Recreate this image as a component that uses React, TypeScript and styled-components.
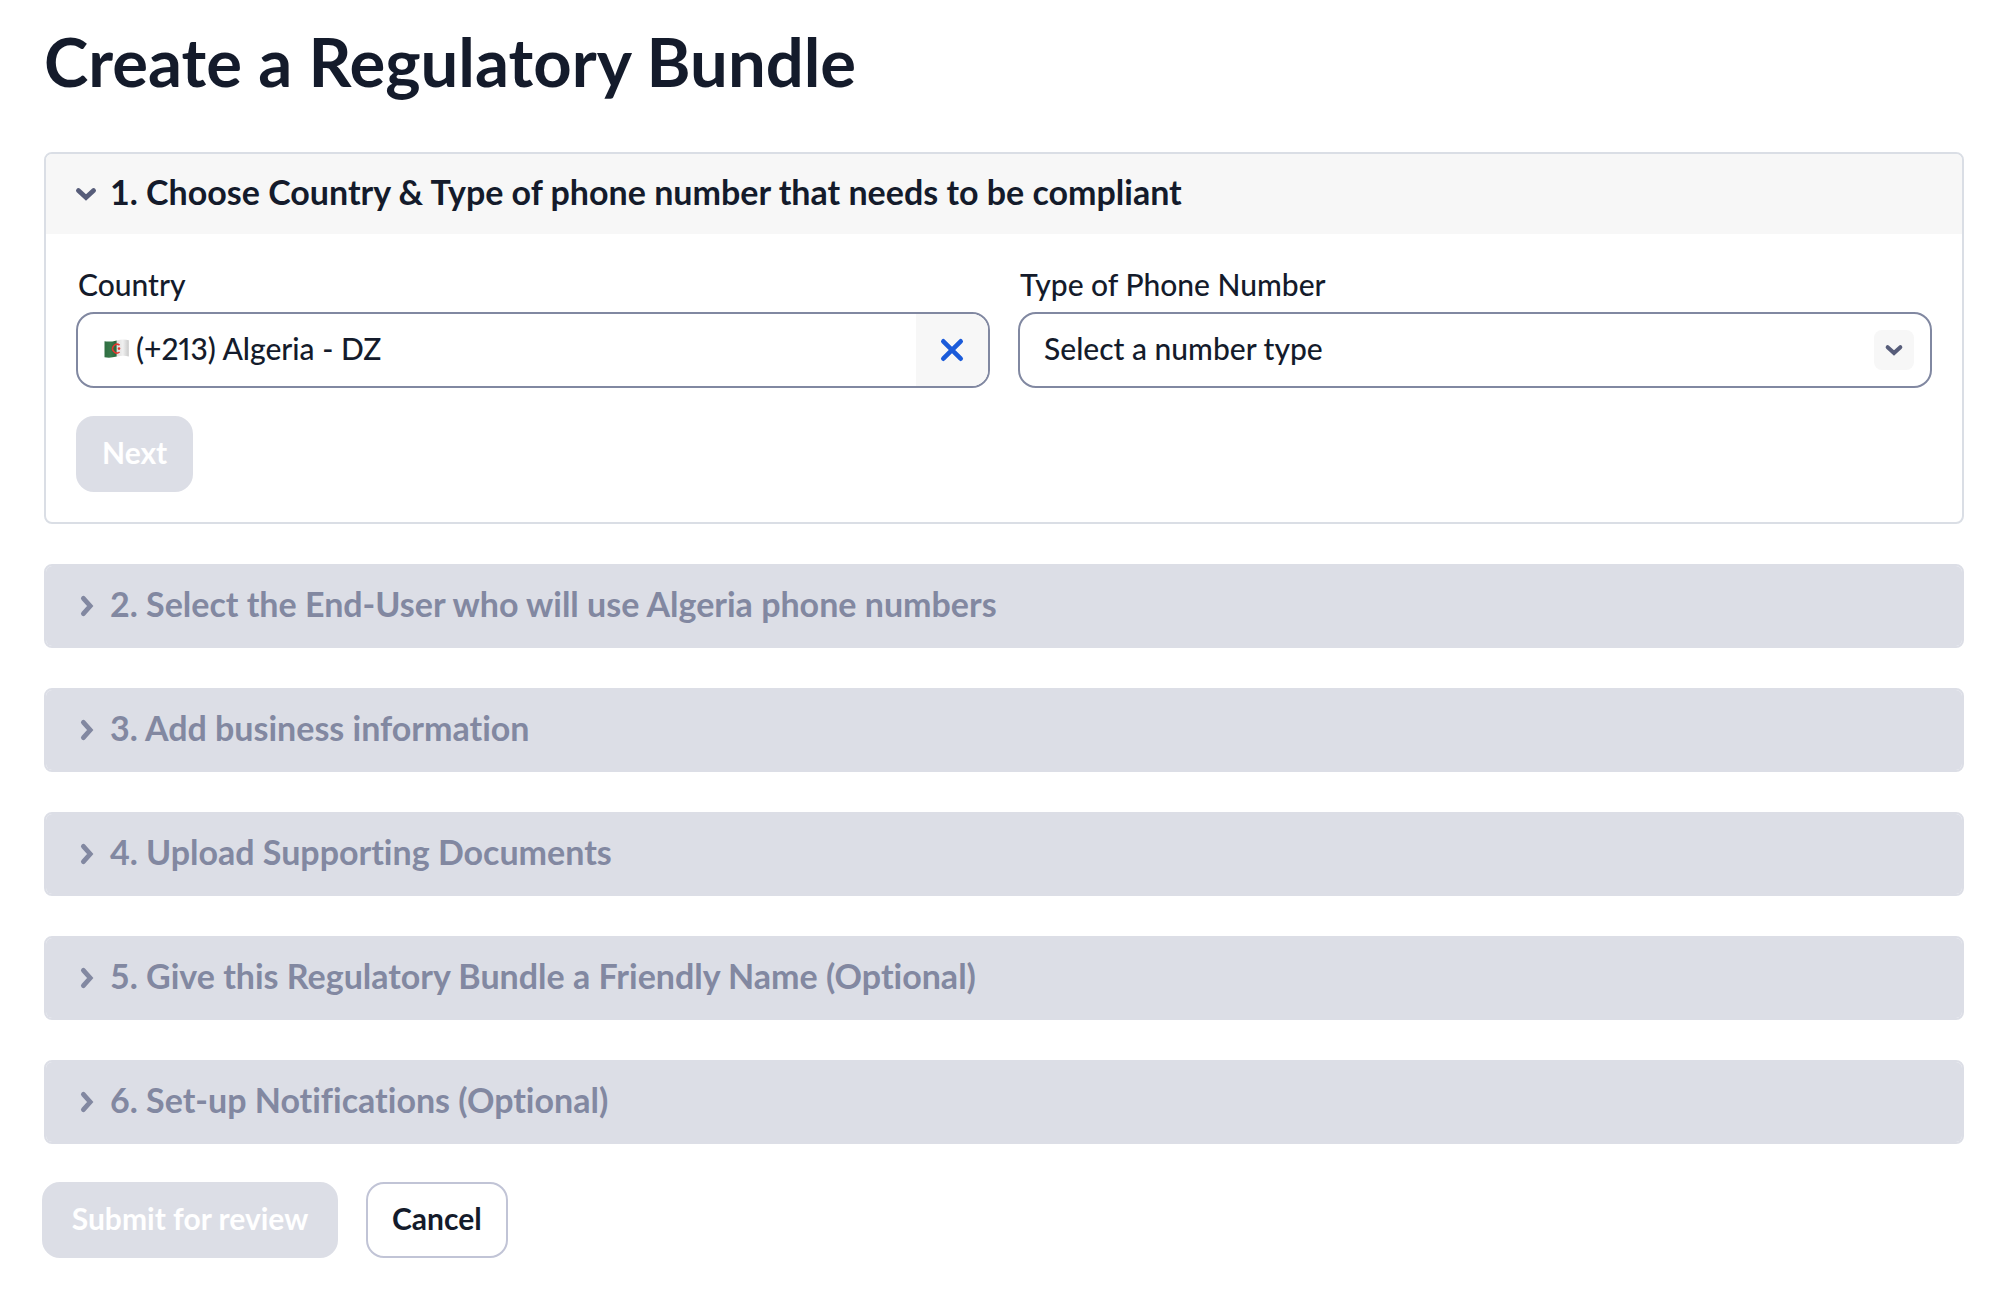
import React, { useState } from 'react';
import styled, { createGlobalStyle, css } from 'styled-components';

const color = {
  text: '#141b2b',
  weak: '#8288a1',
  icon: '#575d7a',
  border: '#dadee5',
  fieldBorder: '#8188a1',
  disabled: '#dcdee6',
  subtle: '#f7f7f7',
  link: '#1b5bda',
};

const GlobalStyle = createGlobalStyle`
  *, *::before, *::after { box-sizing: border-box; }
  body {
    margin: 0;
    background: #ffffff;
    color: ${color.text};
    font-family: Lato, "Open Sans", sans-serif;
    font-size: 30px;
    line-height: 36px;
    font-variant-ligatures: none;
  }
  button, input, select {
    font: inherit;
    color: inherit;
    font-variant-ligatures: none;
  }
`;

const Page = styled.main`
  padding: 20px 36px 48px 42px;
`;

const Sections = styled.div`
  display: flex;
  flex-direction: column;
  gap: 40px;
  padding-left: 2px;
`;

const PageTitle = styled.h1`
  margin: 0 0 50px;
  padding-left: 2px;
  font-size: 67px;
  line-height: 82px;
  font-weight: 700;
`;

const Panel = styled.section<{ $disabled?: boolean }>`
  border: 2px solid ${(p) => (p.$disabled ? color.disabled : color.border)};
  border-radius: 8px;
  overflow: hidden;
`;

const PanelHeading = styled.h2`
  margin: 0;
  font-size: 34px;
  font-weight: 700;
`;

const PanelToggle = styled.button`
  display: flex;
  align-items: center;
  gap: 12px;
  width: 100%;
  padding: 20px 28px;
  border: 0;
  background: ${color.subtle};
  text-align: left;
  &:disabled {
    background: ${color.disabled};
    color: ${color.weak};
  }
`;

const PanelLabel = styled.span`
  padding-bottom: 4px;
`;

const PanelBody = styled.form`
  padding: 32px 30px 30px;
`;

const FieldGrid = styled.div`
  display: grid;
  grid-template-columns: 1fr 1fr;
  gap: 28px;
  margin-bottom: 28px;
`;

const Field = styled.div`
  display: flex;
  flex-direction: column;
  gap: 10px;
  min-width: 0;
`;

const Label = styled.label`
  padding-left: 2px;
  font-weight: 500;
`;

const ControlBox = styled.div`
  position: relative;
  display: flex;
  align-items: stretch;
  height: 76px;
  border: 2px solid ${color.fieldBorder};
  border-radius: 18px;
  overflow: hidden;
`;

const controlText = css`
  flex: 1;
  min-width: 0;
  border: 0;
  outline: 0;
  background: transparent;
  font-weight: 500;
`;

const FlagSlot = styled.span`
  display: flex;
  align-items: center;
  padding-left: 26px;
`;

const ComboInput = styled.input`
  ${controlText}
  padding: 0 6px 4px;
  font-variant-numeric: proportional-nums;
`;

const ClearButton = styled.button`
  display: flex;
  align-items: center;
  justify-content: center;
  width: 72px;
  padding: 0;
  border: 0;
  background: ${color.subtle};
`;

const Select = styled.select`
  ${controlText}
  appearance: none;
  padding: 0 72px 4px 24px;
`;

const SelectChevron = styled.span`
  position: absolute;
  top: 16px;
  right: 16px;
  display: flex;
  align-items: center;
  justify-content: center;
  width: 40px;
  height: 40px;
  border-radius: 8px;
  background: ${color.subtle};
  pointer-events: none;
`;

const Button = styled.button<{ $wide?: boolean }>`
  height: 76px;
  min-width: ${(p) => (p.$wide ? '296px' : '0')};
  padding: 0 24px 4px;
  border: 2px solid #c1c4d6;
  border-radius: 18px;
  background: #ffffff;
  font-weight: 700;
  &:disabled {
    border-color: ${color.disabled};
    background: ${color.disabled};
    color: #ffffff;
  }
`;

const Actions = styled.div`
  display: flex;
  gap: 28px;
  margin-top: 38px;
`;

function Chevron({ open, size = 24, stroke = color.icon }: { open?: boolean; size?: number; stroke?: string }) {
  return (
    <svg width={size} height={size} viewBox="0 0 24 24" fill="none" stroke={stroke} strokeWidth="4.8" strokeLinecap="round" aria-hidden="true">
      <path d={open ? 'M4.4 8.6 L12 15.6 L19.6 8.6' : 'M9.4 4.4 L16.2 12 L9.4 19.6'} />
    </svg>
  );
}

function CloseIcon() {
  return (
    <svg width="24" height="24" viewBox="0 0 24 24" fill="none" stroke={color.link} strokeWidth="4.6" strokeLinecap="round" aria-hidden="true">
      <path d="M3.3 3.3 L20.7 20.7 M20.7 3.3 L3.3 20.7" />
    </svg>
  );
}

function AlgeriaFlag() {
  return (
    <svg width="26" height="24" viewBox="0 0 26 24" role="img" aria-label="Algeria">
      <defs>
        <linearGradient id="flag-green" x1="0" x2="1">
          <stop offset="0" stopColor="#2f6e42" />
          <stop offset="0.5" stopColor="#37794a" />
          <stop offset="1" stopColor="#2a6338" />
        </linearGradient>
        <linearGradient id="flag-white" x1="0" x2="1">
          <stop offset="0" stopColor="#dddddd" />
          <stop offset="0.5" stopColor="#f0f0f0" />
          <stop offset="1" stopColor="#c9c9c9" />
        </linearGradient>
      </defs>
      <path d="M0.5 3.2 C4 4 8 3.6 12.8 2.4 V18.6 C8 19.8 4 20 0.5 19.2 Z" fill="url(#flag-green)" />
      <path d="M12.8 2.4 C17 1.2 21 1.2 24.8 2.2 V18.4 C21 17.4 17 17.6 12.8 18.6 Z" fill="url(#flag-white)" />
      <path d="M15.6 7.2 A4.3 4.3 0 1 0 15.6 14" fill="none" stroke="#e6352f" strokeWidth="1.5" />
      <circle cx="15" cy="10.6" r="1.3" fill="#e6352f" />
    </svg>
  );
}

const LOCKED_STEPS = [
  '2. Select the End-User who will use Algeria phone numbers',
  '3. Add business information',
  '4. Upload Supporting Documents',
  '5. Give this Regulatory Bundle a Friendly Name (Optional)',
  '6. Set-up Notifications (Optional)',
];

export default function App() {
  const [country, setCountry] = useState('(+213) Algeria - DZ');

  return (
    <>
      <GlobalStyle />
      <Page>
        <PageTitle>Create a Regulatory Bundle</PageTitle>
        <Sections>
          <Panel>
            <PanelHeading>
              <PanelToggle type="button" aria-expanded="true">
                <Chevron open />
                <PanelLabel>1. Choose Country &amp; Type of phone number that needs to be compliant</PanelLabel>
              </PanelToggle>
            </PanelHeading>
            <PanelBody>
              <FieldGrid>
                <Field>
                  <Label htmlFor="country">Country</Label>
                  <ControlBox>
                    {country && (
                      <FlagSlot>
                        <AlgeriaFlag />
                      </FlagSlot>
                    )}
                    <ComboInput id="country" type="text" value={country} onChange={(e) => setCountry(e.target.value)} />
                    <ClearButton type="button" aria-label="Clear country" onClick={() => setCountry('')}>
                      <CloseIcon />
                    </ClearButton>
                  </ControlBox>
                </Field>
                <Field>
                  <Label htmlFor="number-type">Type of Phone Number</Label>
                  <ControlBox>
                    <Select id="number-type" defaultValue="">
                      <option value="">Select a number type</option>
                    </Select>
                    <SelectChevron>
                      <Chevron open size={20} />
                    </SelectChevron>
                  </ControlBox>
                </Field>
              </FieldGrid>
              <Button type="submit" disabled>Next</Button>
            </PanelBody>
          </Panel>
          {LOCKED_STEPS.map((title) => (
            <Panel key={title} $disabled>
              <PanelHeading>
                <PanelToggle type="button" aria-expanded="false" disabled>
                  <Chevron stroke={color.weak} />
                  <PanelLabel>{title}</PanelLabel>
                </PanelToggle>
              </PanelHeading>
            </Panel>
          ))}
        </Sections>
        <Actions>
          <Button type="button" $wide disabled>Submit for review</Button>
          <Button type="button">Cancel</Button>
        </Actions>
      </Page>
    </>
  );
}
